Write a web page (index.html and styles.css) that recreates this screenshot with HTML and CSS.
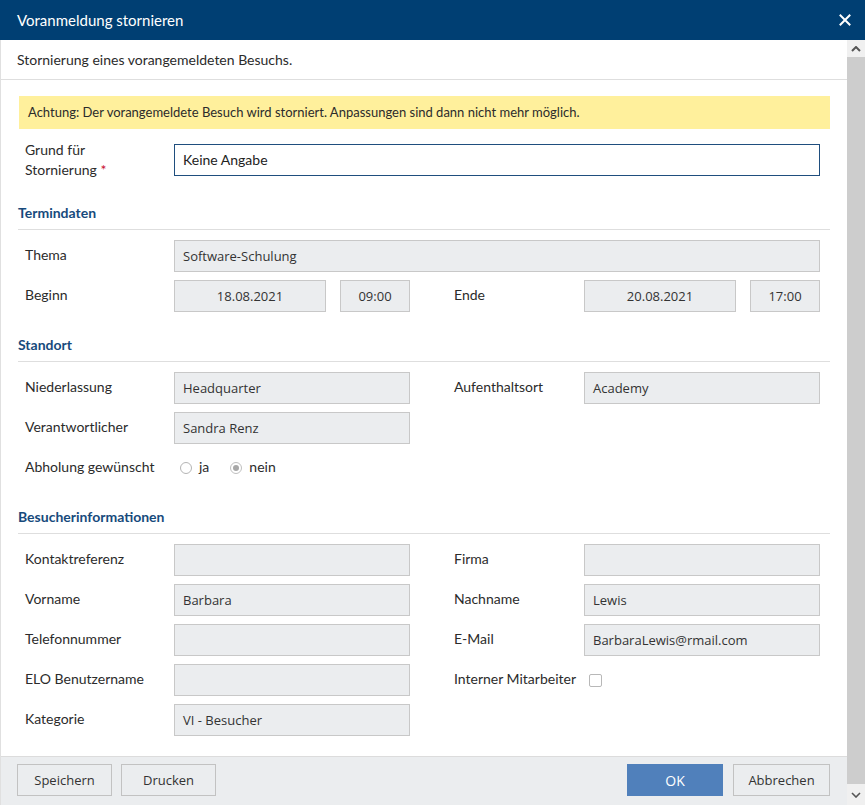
FILE: index.html
```html
<!DOCTYPE html>
<html lang="de">
<head>
<meta charset="utf-8">
<title>Voranmeldung stornieren</title>
<link rel="stylesheet" href="styles.css">
</head>
<body>
<div class="dialog">
  <div class="titlebar">
    <span class="title">Voranmeldung stornieren</span>
    <svg class="close" width="12" height="12" viewBox="0 0 12 12"><path d="M1.5 1.5 L10.5 10.5 M10.5 1.5 L1.5 10.5" stroke="#fff" stroke-width="2" stroke-linecap="square"/></svg>
  </div>
  <div class="body">
    <div class="main">
      <div class="scroll">
        <div class="subheader">Stornierung eines vorangemeldeten Besuchs.</div>
        <div class="content">
          <div class="warning">Achtung: Der vorangemeldete Besuch wird storniert. Anpassungen sind dann nicht mehr möglich.</div>

          <div class="grid first">
            <div class="label two"><span>Grund für<br>Stornierung <span class="req">*</span></span></div>
            <div class="field span4"><div class="input active">Keine Angabe</div></div>
          </div>

          <h2 class="section top">Termindaten</h2>
          <div class="grid">
            <div class="label">Thema</div>
            <div class="field span4"><div class="input">Software-Schulung</div></div>

            <div class="label">Beginn</div>
            <div class="field pair"><div class="input center date">18.08.2021</div><div class="input center time">09:00</div></div>
            <div class="spacer"></div>
            <div class="label">Ende</div>
            <div class="field pair"><div class="input center date">20.08.2021</div><div class="input center time">17:00</div></div>
          </div>

          <h2 class="section">Standort</h2>
          <div class="grid">
            <div class="label">Niederlassung</div>
            <div class="field"><div class="input">Headquarter</div></div>
            <div class="spacer"></div>
            <div class="label">Aufenthaltsort</div>
            <div class="field"><div class="input">Academy</div></div>

            <div class="label">Verantwortlicher</div>
            <div class="field"><div class="input">Sandra Renz</div></div>
            <div class="spacer"></div>
            <div class="label"></div>
            <div class="field"></div>

            <div class="label">Abholung gewünscht</div>
            <div class="field radios">
              <span class="radio"></span><span class="rlabel">ja</span>
              <span class="radio checked"></span><span class="rlabel">nein</span>
            </div>
          </div>

          <h2 class="section">Besucherinformationen</h2>
          <div class="grid">
            <div class="label">Kontaktreferenz</div>
            <div class="field"><div class="input"></div></div>
            <div class="spacer"></div>
            <div class="label">Firma</div>
            <div class="field"><div class="input"></div></div>

            <div class="label">Vorname</div>
            <div class="field"><div class="input">Barbara</div></div>
            <div class="spacer"></div>
            <div class="label">Nachname</div>
            <div class="field"><div class="input">Lewis</div></div>

            <div class="label">Telefonnummer</div>
            <div class="field"><div class="input"></div></div>
            <div class="spacer"></div>
            <div class="label">E-Mail</div>
            <div class="field"><div class="input">BarbaraLewis@rmail.com</div></div>

            <div class="label">ELO Benutzername</div>
            <div class="field"><div class="input"></div></div>
            <div class="spacer"></div>
            <div class="label">Interner Mitarbeiter</div>
            <div class="field"><span class="checkbox"></span></div>

            <div class="label">Kategorie</div>
            <div class="field"><div class="input">VI - Besucher</div></div>
          </div>
        </div>
      </div>
      <div class="footer">
        <div class="btns">
          <button class="btn">Speichern</button>
          <button class="btn">Drucken</button>
        </div>
        <div class="btns">
          <button class="btn primary">OK</button>
          <button class="btn wide">Abbrechen</button>
        </div>
      </div>
    </div>
    <div class="scrollbar">
      <div class="sb-arrow"><svg width="10" height="6" viewBox="0 0 10 6"><path d="M1 5 L5 1 L9 5" fill="none" stroke="#555" stroke-width="2"/></svg></div>
      <div class="sb-thumb"></div>
      <div class="sb-arrow bottom"><svg width="10" height="6" viewBox="0 0 10 6"><path d="M1 1 L5 5 L9 1" fill="none" stroke="#555" stroke-width="1.6"/></svg></div>
    </div>
  </div>
</div>
</body>
</html>
```

FILE: styles.css
```css
* { box-sizing: border-box; }
html, body { margin: 0; padding: 0; }
body {
  width: 865px;
  height: 805px;
  overflow: hidden;
  font-family: Lato, "Liberation Sans", sans-serif;
  font-size: 14px;
  color: #2b2b2b;
  background: #fff;
}
.dialog {
  width: 865px;
  height: 805px;
  display: flex;
  flex-direction: column;
}
.titlebar {
  height: 40px;
  flex: none;
  background: #003f73;
  color: #fff;
  display: flex;
  align-items: center;
  justify-content: space-between;
  padding: 0 14px 0 17px;
}
.title { font-size: 15px; }
.close { display: block; margin-top: -1px; }
.body {
  flex: 1;
  display: flex;
  min-height: 0;
}
.main {
  flex: 1;
  display: flex;
  flex-direction: column;
  border-left: 1px solid #e0e0e0;
  min-width: 0;
}
.scroll {
  flex: 1;
  overflow: hidden;
}
.subheader {
  height: 40px;
  padding: 0 16px 1px;
  display: flex;
  align-items: center;
  border-bottom: 1px solid #dedede;
  font-size: 14px;
}
.content {
  padding: 16px 17px 0 17px;
}
.warning {
  background: #fff09c;
  height: 33px;
  margin-left: 1px;
  padding: 0 8px 1px 9px;
  display: flex;
  align-items: center;
  font-size: 13px;
}
.grid {
  display: grid;
  grid-template-columns: 149px 236px 44px 130px 236px;
  grid-auto-rows: 40px;
  padding-left: 7px;
}
.grid.first { margin-top: 11px; }
.label {
  display: flex;
  align-items: center;
  white-space: nowrap;
  padding-bottom: 3px;
}
.label.two { line-height: 20px; padding-bottom: 0; }
.req { color: #c8102e; }
.field {
  display: flex;
  align-items: center;
}
.span4 { grid-column: 2 / span 4; }
.input {
  width: 100%;
  height: 32px;
  background: #ebedef;
  border: 1px solid #c8c8c8;
  display: flex;
  align-items: center;
  padding: 0 8px;
  font-family: "Open Sans", "Liberation Sans", sans-serif;
  font-size: 13px;
  color: #333;
}
.input.active {
  background: #fff;
  border-color: #1f4e7e;
  font-family: Lato, "Liberation Sans", sans-serif;
  font-size: 14px;
  color: #222;
  padding-bottom: 2px;
}
.input.center { justify-content: center; }
.pair { gap: 14px; }
.pair .date { width: 152px; flex: none; }
.pair .time { width: 70px; flex: none; }
.section {
  margin: 19px 0 6px 0;
  padding: 0 0 6px 0;
  line-height: 20px;
  font-size: 14px;
  font-weight: 700;
  color: #174a7c;
  border-bottom: 1px solid #dedede;
  width: 812px;
}
.section.top { margin-top: 23px; }
.radios { padding-left: 6px; }
.radio {
  width: 12px;
  height: 12px;
  border-radius: 50%;
  border: 1px solid #b5b5b5;
  background: #fff;
  flex: none;
  position: relative;
}
.radio.checked { border-color: #c0c0c0; }
.radio.checked::after {
  content: "";
  position: absolute;
  left: 2px; top: 2px;
  width: 6px; height: 6px;
  border-radius: 50%;
  background: #a8a8a8;
}
.rlabel { margin-left: 7px; margin-right: 21px; padding-bottom: 3px; }
.checkbox {
  width: 13px;
  height: 13px;
  border: 1px solid #b8b8b8;
  border-radius: 2px;
  background: #fff;
  margin-left: 5px;
}
.footer {
  height: 49px;
  flex: none;
  background: #ebedef;
  border-top: 1px solid #dcdcdc;
  display: flex;
  justify-content: space-between;
  padding: 7px 17px 0 16px;
}
.btns { display: flex; gap: 9px; }
.btns + .btns { gap: 10px; }
.btn {
  width: 95px;
  height: 32px;
  border: 1px solid #c2c2c2;
  background: #ebedef;
  font-family: "Open Sans", "Liberation Sans", sans-serif;
  font-size: 13px;
  color: #333;
  padding: 0;
}
.btn.primary {
  width: 96px;
  margin-left: -1px;
  background: #5080bb;
  border-color: #5080bb;
  color: #fff;
  font-size: 14px;
}
.btn.wide { width: 97px; }
.scrollbar {
  width: 18px;
  flex: none;
  display: flex;
  flex-direction: column;
  background: #cdcdcd;
}
.sb-arrow {
  height: 17px;
  background: #f0f0f0;
  display: flex;
  align-items: center;
  justify-content: center;
}
.sb-arrow.bottom { height: 21px; }
.sb-thumb { flex: 1; background: #cdcdcd; }
```
